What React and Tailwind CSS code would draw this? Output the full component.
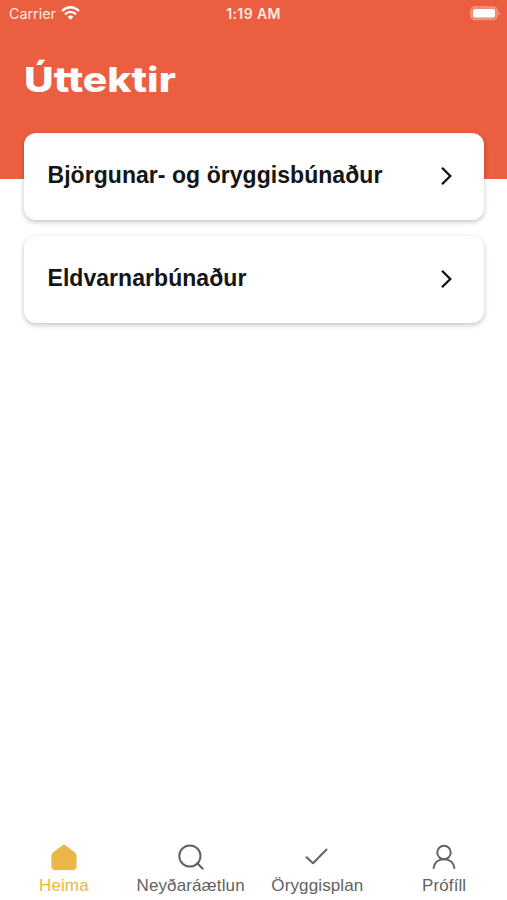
const cards = ['Björgunar- og öryggisbúnaður', 'Eldvarnarbúnaður'];

function HomeIcon() {
  return (
    <svg width="28" height="28" viewBox="0 0 28 28" fill="currentColor">
      <path d="M12.200 2.400Q14 1 15.800 2.400L24.400 9Q26.600 10.500 26.600 13V23Q26.600 26.900 22.700 26.900H5.300Q1.400 26.900 1.400 23V13Q1.400 10.500 3.600 9Z" />
    </svg>
  );
}

function SearchIcon() {
  return (
    <svg width="28" height="28" viewBox="0 0 28 28" fill="none" stroke="currentColor" strokeWidth="2" strokeLinecap="round">
      <circle cx="12.900" cy="13" r="10.600" />
      <path d="M20.300 20.300L25.700 25.700" />
    </svg>
  );
}

function CheckIcon() {
  return (
    <svg width="28" height="28" viewBox="0 0 28 28" fill="none" stroke="currentColor" strokeWidth="2" strokeLinecap="round" strokeLinejoin="round">
      <path d="M3.500 14.200L10 20.300L23.500 6.500" />
    </svg>
  );
}

function ProfileIcon() {
  return (
    <svg width="28" height="28" viewBox="0 0 28 28" fill="none" stroke="currentColor" strokeWidth="2" strokeLinecap="round">
      <circle cx="14" cy="9.500" r="6.700" />
      <path d="M3.700 25C4.300 19.700 8.300 16.200 14 16.200S23.700 19.700 24.300 25" />
    </svg>
  );
}

const tabs = [
  { label: 'Heima', Icon: HomeIcon, active: true },
  { label: 'Neyðaráætlun', Icon: SearchIcon },
  { label: 'Öryggisplan', Icon: CheckIcon },
  { label: 'Prófíll', Icon: ProfileIcon },
];

function StatusBar() {
  return (
    <div className="grid h-7 grid-cols-3 items-center font-['Inter',sans-serif] leading-none text-[#ffe9e0]">
      <div className="flex items-center gap-[5px] pl-[9px]">
        <span className="text-[14.300px]">Carrier</span>
        <svg className="-mt-0.5" width="19" height="14" viewBox="0 0 19 14" fill="none" stroke="#fff" strokeWidth="2.300">
          <path d="M1 5Q9.500-2.600 18 5" />
          <path d="M4 8.400Q9.500 3.400 15 8.400" />
          <path d="M6.600 10.800Q9.500 8.400 12.400 10.800L9.500 13.800Z" fill="#fff" stroke="none" />
        </svg>
      </div>
      <span className="text-center text-[14px] font-semibold tracking-[0.400px]">1:19 AM</span>
      <svg className="-mt-0.5 mr-1.5 justify-self-end" width="31" height="15" viewBox="0 0 31 15">
        <rect x="0.700" y="0.700" width="26.500" height="13" rx="4" fill="#f08a70" stroke="#f39a83" />
        <rect x="3" y="3" width="22" height="8.500" rx="2" fill="#fff" />
        <path d="M28.500 5Q31.500 7.200 28.500 9.500Z" fill="#f39a83" />
      </svg>
    </div>
  );
}

export default function App() {
  return (
    <div className="flex h-[900px] w-full flex-col overflow-hidden bg-white font-['Liberation_Sans',Arial,sans-serif]">
      <header className="h-[179px] shrink-0 bg-[#eb5e40]">
        <StatusBar />
        <h1 className="mt-[31px] ml-6 w-max origin-left scale-x-[1.2] font-['Inter',sans-serif] text-[34px] leading-[42px] font-extrabold text-white">
          Úttektir
        </h1>
      </header>
      <main className="relative -mt-[46px] flex grow flex-col gap-4 pr-[23px] pl-6">
        {cards.map((title) => (
          <button key={title} className="flex h-[87px] items-center justify-between rounded-xl bg-white pr-[26px] pb-0.5 pl-[23.500px] text-left shadow-[0_2px_5px_rgba(0,0,0,0.24)]">
            <span className="text-[23px] font-bold tracking-[0.050px] text-[#151515]">{title}</span>
            <svg width="24" height="24" viewBox="0 0 24 24" fill="none" stroke="#111" strokeWidth="2.300">
              <path d="M8 3.700L16.300 12L8 20.300" />
            </svg>
          </button>
        ))}
      </main>
      <nav className="grid h-[57px] shrink-0 grid-cols-4 text-[#626262]">
        {tabs.map(({ label, Icon, active }) => (
          <a key={label} className={active ? 'flex flex-col items-center pl-px text-[#ebb64a]' : 'flex flex-col items-center pl-px'}>
            <Icon />
            <span className="text-[17px] leading-[29px] tracking-[0.120px] whitespace-nowrap">{label}</span>
          </a>
        ))}
      </nav>
    </div>
  );
}
